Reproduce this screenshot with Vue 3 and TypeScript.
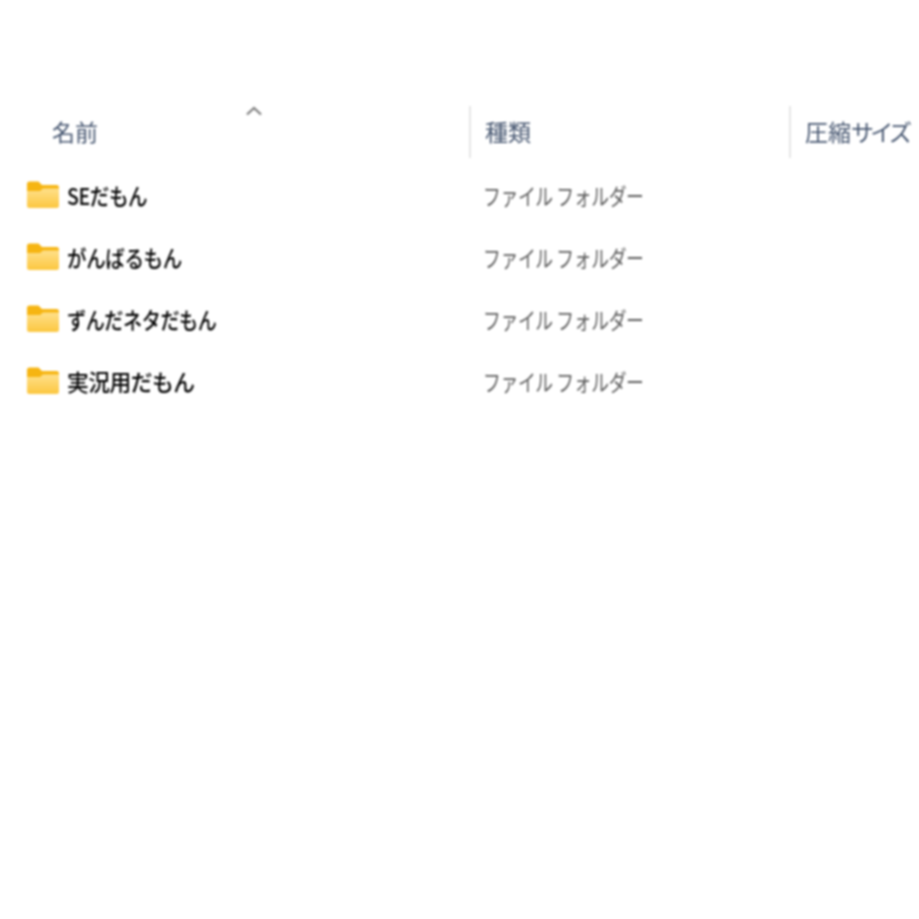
<script setup lang="ts">
interface Row {
  name: string
  squeeze: number
}
const rows: Row[] = [
  { name: 'SEだもん', squeeze: 0.85 },
  { name: 'がんばるもん', squeeze: 0.85 },
  { name: 'ずんだネタだもん', squeeze: 0.83 },
  { name: '実況用だもん', squeeze: 0.945 },
]
</script>

<template>
  <div class="page">
    <div class="header">
      <div class="col name">
        名前
        <svg class="caret" width="18" height="10" viewBox="0 0 18 10" fill="none">
          <path d="M2 8.500 9 2l7 6.500" stroke="#7d7d7d" stroke-width="2.200" />
        </svg>
      </div>
      <div class="col type">種類</div>
      <div class="col size">圧縮<span class="tight">サイズ</span></div>
    </div>
    <div class="rows">
      <div v-for="r in rows" :key="r.name" class="row">
        <div class="cell-name">
          <svg class="folder" width="32" height="27" viewBox="0 0 32 27">
            <defs>
              <linearGradient id="fg" x1="0" y1="0" x2="0" y2="1">
                <stop offset="0" stop-color="#ffe08a" />
                <stop offset="1" stop-color="#fcc740" />
              </linearGradient>
            </defs>
            <path d="M0 3A2.500 2.500 0 0 1 2.500 .5h9l3.500 3.500h14.500A2.500 2.500 0 0 1 32 6.500v6H0z" fill="#f6b512" />
            <path d="M0 10h13l3-2.500H32v17a2.500 2.500 0 0 1-2.500 2.500h-27A2.500 2.500 0 0 1 0 24.500z" fill="url(#fg)" />
          </svg>
          <span class="label" :style="{ transform: `scaleX(${r.squeeze})` }">{{ r.name }}</span>
        </div>
        <div class="cell-type"><span class="squeezed">ファイル フォルダー</span></div>
      </div>
    </div>
  </div>
</template>

<style scoped>
.page {
  width: 919px;
  height: 919px;
  overflow: hidden;
  background: #fff;
  padding-top: 106px;
  box-sizing: border-box;
  font-family: "Noto Sans CJK JP", "Noto Sans", sans-serif;
  font-size: 23px;
  filter: blur(0.8px);
}
.header {
  display: flex;
  height: 52px;
  color: #465670;
}
.col {
  display: flex;
  align-items: center;
  box-sizing: border-box;
  height: 52px;
  white-space: nowrap;
  padding-bottom: 3px;
}
.name {
  width: 469px;
  padding-left: 52px;
  position: relative;
}
.caret {
  position: absolute;
  left: 245px;
  top: 0;
}
.type {
  width: 320px;
  padding-left: 14px;
  border-left: 2px solid #e6e6e6;
}
.size {
  flex: 1;
  padding-left: 14px;
  border-left: 2px solid #e6e6e6;
}
.tight {
  letter-spacing: -3.7px;
}
.rows {
  display: flex;
  flex-direction: column;
  padding-top: 8px;
}
.row {
  display: flex;
  height: 62px;
  align-items: center;
}
.cell-name {
  width: 483px;
  display: flex;
  align-items: center;
  padding-left: 27px;
  box-sizing: border-box;
  color: #000;
}
.folder {
  flex: none;
  margin-right: 8px;
  margin-top: -6px;
}
.label {
  display: inline-block;
  margin-top: -4px;
  white-space: nowrap;
  letter-spacing: -0.5px;
  font-weight: 500;
  transform-origin: left center;
}
.cell-type {
  color: #5c5c5c;
  letter-spacing: -0.5px;
  white-space: nowrap;
  margin-top: -4px;
}
.squeezed {
  display: inline-block;
  transform: scaleX(0.775);
  transform-origin: left center;
}
</style>
